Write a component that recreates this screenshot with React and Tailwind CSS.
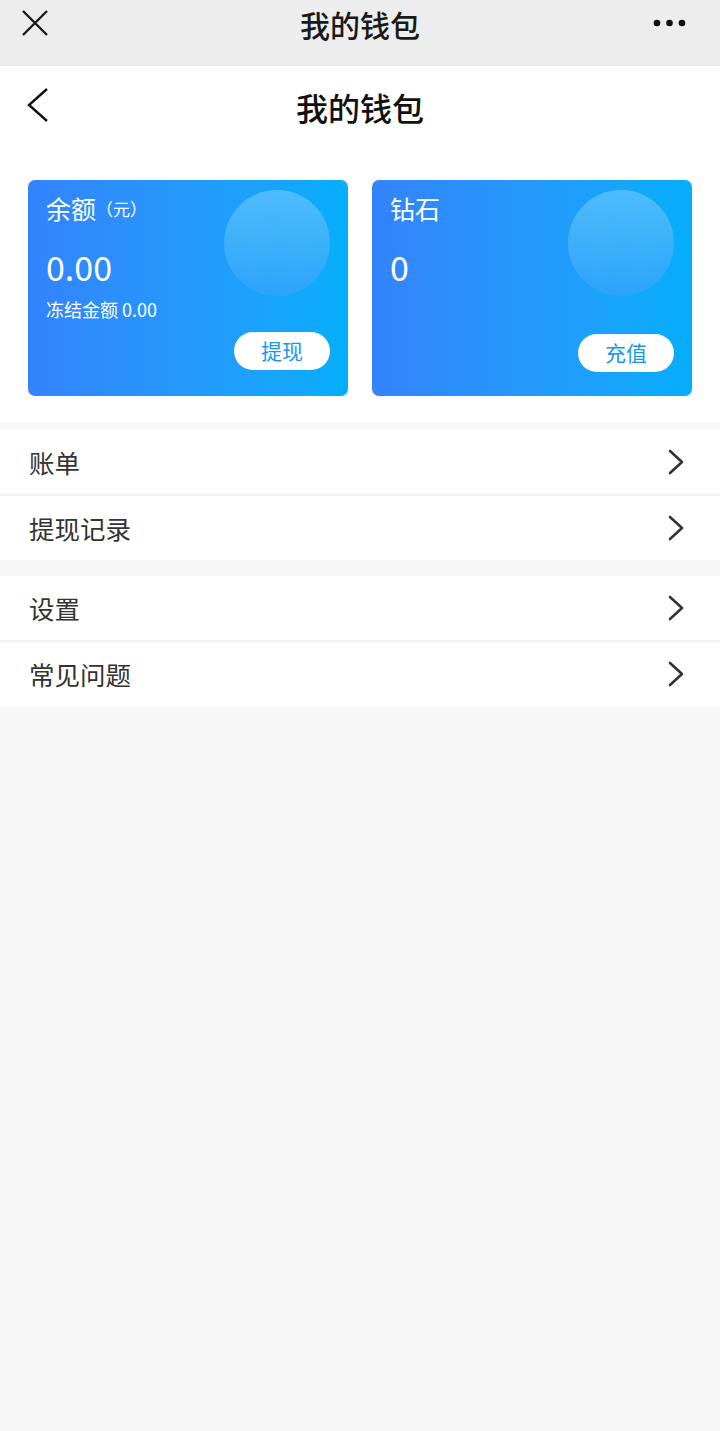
import React from 'react';

const font = { fontFamily: '"Noto Sans CJK SC", "Noto Sans", sans-serif' };

const Chevron = () => (
  <svg width="20" height="28" viewBox="0 0 20 28" fill="none">
    <path d="M4 3 L16 14 L4 25" stroke="#333" strokeWidth="2.6" strokeLinecap="round" strokeLinejoin="round" />
  </svg>
);

const Row = ({ label, border }) => (
  <div className={`flex items-center justify-between bg-white pl-[29px] pr-[34px] ${border ? 'h-[66px] border-b-2 border-[#f3f3f3]' : 'h-[64px]'}`}>
    <span className="text-[25.5px] text-[#333]">{label}</span>
    <Chevron />
  </div>
);

const Card = ({ title, unit, value, sub, action, btnTop }) => (
  <div className="relative flex-1 h-[216px] rounded-[7px] overflow-hidden bg-gradient-to-r from-[#3383fc] to-[#03aefb] text-white">
    <div className="absolute left-[196px] top-[10px] w-[106px] h-[106px] rounded-full bg-gradient-to-b from-[#5cc2fb] to-[#2fa3fb] opacity-80" />
    <div className="relative flex flex-col h-full pl-[18px] pt-[10px]">
      <div className="flex items-end leading-none h-[36px]">
        <span className="text-[25px] leading-[36px]">{title}</span>
        {unit && <span className="text-[17px] leading-[34px]">{unit}</span>}
      </div>
      <div className="text-[34px] leading-none mt-[24px]">{value}</div>
      <div className="text-[18px] leading-none mt-[16px] h-[18px]">{sub}</div>
      <div className={`flex justify-end pr-[18px] ${btnTop}`}>
        <button className="w-[96px] h-[38px] rounded-full bg-white text-[#1898f2] text-[21px]">{action}</button>
      </div>
    </div>
  </div>
);

export default function App() {
  return (
    <div className="min-h-[1431px] bg-[#f7f7f7]" style={font}>
      {/* wechat top bar */}
      <div className="relative h-[66px] bg-[#ededed] flex justify-center">
        <svg className="absolute left-[21px] top-[9px]" width="28" height="28" viewBox="0 0 28 28">
          <path d="M2 2 L26 26 M26 2 L2 26" stroke="#1a1a1a" strokeWidth="2.4" />
        </svg>
        <span className="text-[30px] font-medium text-[#1a1a1a] leading-[48px]">我的钱包</span>
        <svg className="absolute left-[651px] top-[17px]" width="38" height="12" viewBox="0 0 38 12">
          <circle cx="6" cy="6" r="3.3" fill="#111" />
          <circle cx="18.5" cy="6" r="3.3" fill="#111" />
          <circle cx="31" cy="6" r="3.3" fill="#111" />
        </svg>
      </div>

      <div className="bg-white">
        <div className="relative h-[84px] flex items-center justify-center">
          <svg className="absolute left-[26px] top-[21px]" width="24" height="36" viewBox="0 0 24 36">
            <path d="M21 2 L3 18 L21 34" stroke="#111" strokeWidth="2.4" fill="none" />
          </svg>
          <span className="text-[32px] font-medium text-[#111] leading-none -mt-[3px]">我的钱包</span>
        </div>
        <div className="flex gap-[24px] px-[28px] pt-[30px] pb-[26px]">
          <Card title="余额" unit="（元）" value="0.00" sub="冻结金额 0.00" action="提现" btnTop="mt-[14px]" />
          <Card title="钻石" value="0" sub="" action="充值" btnTop="mt-[16px]" />
        </div>
      </div>

      <div className="mt-[8px]">
        <Row label="账单" border />
        <Row label="提现记录" />
      </div>
      <div className="mt-[16px]">
        <Row label="设置" border />
        <Row label="常见问题" />
      </div>
    </div>
  );
}
